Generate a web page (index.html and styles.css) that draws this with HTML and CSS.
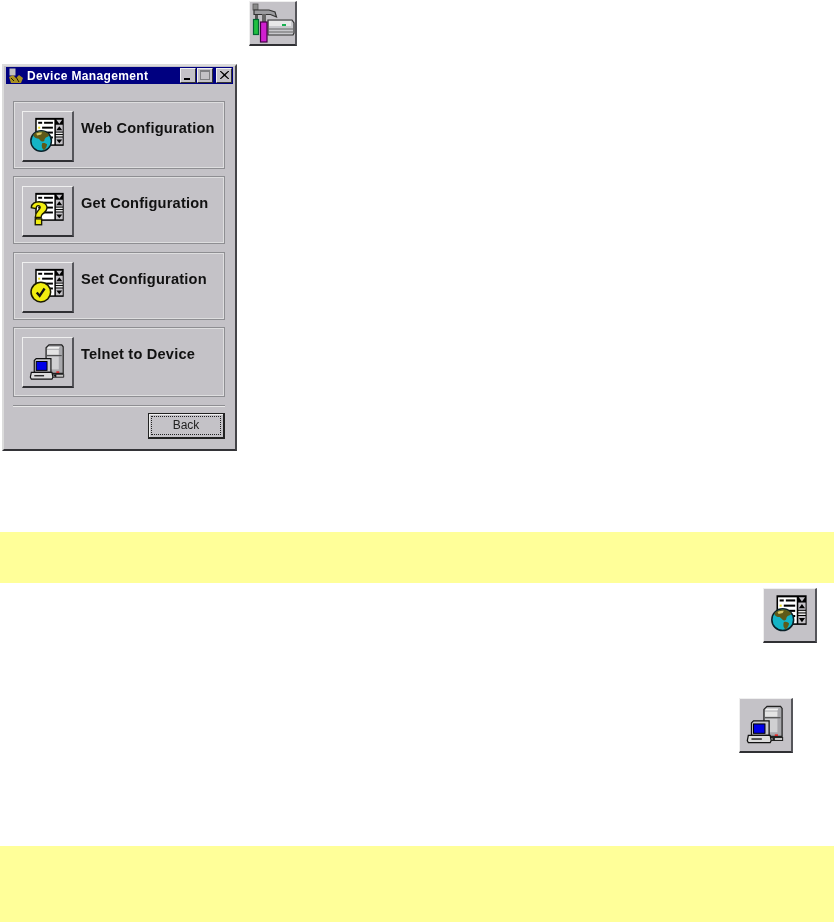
FILE: index.html
```html
<!DOCTYPE html>
<html lang="en">
<head>
    <meta charset="UTF-8">
    <title>Device Management</title>
    <link rel="stylesheet" href="styles.css">
</head>
<body>
<svg class="defs" width="0" height="0">
    <defs>
        <g id="listform">
            <rect x="13" y="7" width="29" height="28.500" fill="#000"/>
            <rect x="14.500" y="9" width="18" height="25" fill="#fff"/>
            <rect x="16" y="11" width="4" height="2" fill="#000"/>
            <rect x="22" y="11" width="9" height="2" fill="#000"/>
            <rect x="16" y="16" width="2" height="2" fill="#e8d820"/>
            <rect x="20" y="16" width="11" height="2" fill="#000"/>
            <rect x="16" y="21" width="15" height="2" fill="#000"/>
            <rect x="16" y="26" width="15" height="2" fill="#000"/>
            <path d="M34.500 9h6l-3 4z" fill="#c4c2c7"/>
            <rect x="34" y="14" width="7" height="7" fill="#c4c2c7"/>
            <path d="M37.500 15.500l3 4h-6z" fill="#000"/>
            <rect x="34" y="22" width="7" height="1.500" fill="#e8e8e8"/>
            <rect x="34" y="24.500" width="7" height="1.500" fill="#e8e8e8"/>
            <rect x="34" y="27" width="7" height="7" fill="#c4c2c7"/>
            <path d="M37.500 33l-3-4h6z" fill="#000"/>
        </g>
        <symbol id="icon-web" viewBox="0 0 52 52">
            <use href="#listform"/>
            <circle cx="19" cy="30.500" r="10.500" fill="#14b4c6" stroke="#0a2028" stroke-width="1.500"/>
            <path d="M11 24c3-3 7-4 11-3 2 1 5 2 5 4-1 2-3 1-4 3-1 1 0 3-2 3-2 1-3-2-5-3-2 0-5-1-5-4z" fill="#5f5a18"/>
            <path d="M20 33c2-1 4 0 5 1 0 2-1 4-3 6-2-1-3-4-2-7z" fill="#5f5a18"/>
            <path d="M14 23c2-1 4-1 6-1l-1 2-4 1z" fill="#d8c868"/>
        </symbol>
        <symbol id="icon-get" viewBox="0 0 52 52">
            <use href="#listform"/>
            <path d="M9 22c0-4 4-6 8-6 5 0 8 3 8 6 0 4-3 5-5 7-1 1-1 2-1 3h-6c0-4 1-5 3-7 1-1 2-2 2-3s-1-2-2-2-2 1-2 3z" fill="#f2ee10" stroke="#1a1a00" stroke-width="1.400"/>
            <rect x="13" y="33.500" width="6.500" height="6" fill="#f2ee10" stroke="#1a1a00" stroke-width="1.400"/>
        </symbol>
        <symbol id="icon-set" viewBox="0 0 52 52">
            <use href="#listform"/>
            <circle cx="18.700" cy="30.700" r="10" fill="#f2ee10" stroke="#1a1a00" stroke-width="1.600"/>
            <path d="M14.500 31l3 3.500 5-7.500" fill="none" stroke="#111" stroke-width="2.400"/>
        </symbol>
        <symbol id="icon-telnet" viewBox="0 0 52 52">
            <path d="M24 11l3-3h13l1.500 2v27H24z" fill="#a8a8ac" stroke="#222" stroke-width="1.200"/>
            <path d="M26 10h12l-1 2H25z" fill="#f2f2f2"/>
            <rect x="25" y="13" width="12" height="5" fill="#e4e4e4"/>
            <path d="M25 19h15" stroke="#444" stroke-width="1"/>
            <rect x="25" y="20" width="12" height="13" fill="#d0d0d2"/>
            <rect x="34.500" y="35" width="3" height="1.600" fill="#e02020"/>
            <path d="M28 38h14v3H28z" fill="#c8c8c8" stroke="#222" stroke-width="1"/>
            <path d="M12 24l2-2h15v14H12z" fill="#c8c8cc" stroke="#111" stroke-width="1.200"/>
            <rect x="14" y="25" width="11" height="9" fill="#0000e8" stroke="#000" stroke-width="1"/>
            <path d="M9 36h21l1 5-1 2H9l-1-2z" fill="#dcdcdc" stroke="#111" stroke-width="1.200"/>
            <path d="M12 39.500h10" stroke="#222" stroke-width="1.400"/>
            <path d="M31 39.500l3.500-1.500v3z" fill="#111"/>
        </symbol>
        <symbol id="icon-tools" viewBox="0 0 46 44">
            <path d="M18 18h24l2 3v10l-1 2H18z" fill="#c8c8cc" stroke="#333" stroke-width="1.200"/>
            <rect x="19" y="19" width="22" height="5" fill="#e8e8e8"/>
            <path d="M18 27h25M18 30h25" stroke="#666" stroke-width="1"/>
            <rect x="32" y="22" width="4" height="2" fill="#18b050"/>
            <rect x="3" y="2" width="5" height="6" fill="#8a8a8a" stroke="#555" stroke-width=".8"/>
            <path d="M4 8h15l6 2 1.500 5-6-2.500H4z" fill="#9c9ca0" stroke="#333" stroke-width="1.200"/>
            <rect x="5" y="13" width="3" height="5" fill="#555"/>
            <rect x="3.500" y="17.500" width="5" height="15" fill="#20c040" stroke="#063" stroke-width="1.200"/>
            <rect x="12" y="12" width="4" height="9" fill="#666"/>
            <rect x="10.500" y="20" width="6.500" height="20" fill="#d020d0" stroke="#404" stroke-width="1.200"/>
        </symbol>
    </defs>
</svg>

<div class="toprow">
    <div class="iconbtn toolbtn"><svg><use href="#icon-tools"/></svg></div>
</div>

<div class="window">
    <div class="titlebar">
        <svg class="appicon" viewBox="0 0 16 16">
            <rect x="1" y="0" width="7" height="8" fill="#c0c0c0" stroke="#000080"/>
            <path d="M1 9l4-2 3 3 3-3 4 3-2 5H3z" fill="#a89020"/>
            <path d="M3 10l3 3M8 9l3 5" stroke="#201800"/>
        </svg>
        <span class="titletext">Device Management</span>
        <div class="winbtns">
            <div class="winbtn"><span class="minmark"></span></div>
            <div class="winbtn"><span class="maxmark"></span></div>
            <div class="winbtn closebtn"><svg viewBox="0 0 9 8"><path d="M1 0l3.500 3 3.500-3h1v.5L5.500 4 9 7.500V8H8L4.500 5 1 8H0v-.5L3.500 4 0 .5V0z" fill="#000"/></svg></div>
        </div>
    </div>

    <div class="group first">
        <div class="iconbtn"><svg><use href="#icon-web"/></svg></div>
        <div class="grouplabel">Web Configuration</div>
    </div>
    <div class="group">
        <div class="iconbtn"><svg><use href="#icon-get"/></svg></div>
        <div class="grouplabel">Get Configuration</div>
    </div>
    <div class="group">
        <div class="iconbtn"><svg><use href="#icon-set"/></svg></div>
        <div class="grouplabel">Set Configuration</div>
    </div>
    <div class="group last">
        <div class="iconbtn"><svg><use href="#icon-telnet"/></svg></div>
        <div class="grouplabel">Telnet to Device</div>
    </div>

    <div class="separator"></div>
    <div class="backrow">
        <div class="backbtn"><span class="backinner">Back</span></div>
    </div>
</div>

<div class="note note1"></div>

<div class="iconline webline">
    <div class="iconbtn bigbtn"><svg><use href="#icon-web"/></svg></div>
</div>
<div class="iconline telnetline">
    <div class="iconbtn bigbtn"><svg><use href="#icon-telnet"/></svg></div>
</div>

<div class="note note2"></div>
</body>
</html>
```

FILE: styles.css
```css
html, body {
    margin: 0;
    padding: 0;
    background-color: #ffffff;
}

body {
    height: 922px;
    overflow: hidden;
    font-family: "Liberation Sans", Arial, sans-serif;
}

.defs {
    display: block;
    height: 0;
}

.toprow {
    height: 64px;
    padding-left: 249px;
    padding-top: 1px;
    box-sizing: border-box;
}

.iconbtn {
    width: 52px;
    height: 51px;
    box-sizing: border-box;
    background-color: #c4c2c7;
    border-top: 1px solid #efefef;
    border-left: 1px solid #efefef;
    border-right: 2px solid #55555a;
    border-bottom: 2px solid #303034;
    flex-shrink: 0;
    filter: blur(.35px);
}

.iconbtn svg {
    display: block;
    width: 52px;
    height: 51px;
    margin: -1px 0 0 -1px;
}

.toolbtn {
    width: 48px;
    height: 45px;
}

.toolbtn svg {
    width: 46px;
    height: 44px;
    margin: 0;
}

/* dialog window */
.window {
    width: 235px;
    height: 387px;
    margin-left: 2px;
    box-sizing: border-box;
    background-color: #c4c2c7;
    border-top: 2px solid #dcdcdc;
    border-left: 2px solid #dcdcdc;
    border-right: 2px solid #444448;
    border-bottom: 2px solid #333337;
    padding: 1px 2px 0 2px;
}

.titlebar {
    height: 17px;
    background-color: #000080;
    color: #ffffff;
    display: flex;
    align-items: center;
    padding: 0 1px 0 2px;
}

.appicon {
    width: 16px;
    height: 16px;
    flex-shrink: 0;
}

.titletext {
    font-size: 12px;
    font-weight: bold;
    margin-left: 3px;
    letter-spacing: .35px;
    filter: blur(.3px);
}

.winbtns {
    margin-left: auto;
    display: flex;
}

.winbtn {
    width: 16px;
    height: 15px;
    margin-left: 1px;
    box-sizing: border-box;
    background-color: #c4c2c7;
    border-top: 1px solid #f0f0f0;
    border-left: 1px solid #f0f0f0;
    border-right: 1px solid #333;
    border-bottom: 1px solid #333;
    display: flex;
    align-items: flex-end;
    justify-content: center;
    padding-bottom: 2px;
}

.closebtn {
    margin-left: 3px;
}

.minmark {
    width: 6px;
    height: 2px;
    background-color: #000000;
    margin-right: 3px;
}

.maxmark {
    width: 10px;
    height: 10px;
    box-sizing: border-box;
    border: 1px solid #808084;
    border-top-width: 2px;
}

.closebtn svg {
    width: 9px;
    height: 8px;
    display: block;
    margin-bottom: 1px;
}

.group {
    width: 212px;
    height: 68px;
    margin: 7.400px 0 0 7px;
    box-sizing: border-box;
    border: 1px solid #8e8e92;
    outline: 1px solid #dededf;
    outline-offset: -2px;
    display: flex;
    padding: 9px 0 0 8px;
    gap: 7px;
}

.group.first {
    margin-top: 17px;
}

.group.last {
    height: 70px;
}

.grouplabel {
    font-size: 14.600px;
    font-weight: bold;
    letter-spacing: .2px;
    color: #111111;
    padding-top: 9px;
    white-space: nowrap;
    filter: blur(.3px);
}

.separator {
    width: 212px;
    height: 2px;
    box-sizing: border-box;
    margin: 8px 0 0 7px;
    background-color: #8e8e92;
    border-bottom: 1px solid #e8e8e8;
}

.backrow {
    width: 212px;
    margin: 6px 0 0 7px;
    display: flex;
    justify-content: flex-end;
}

.backbtn {
    width: 77px;
    height: 26px;
    box-sizing: border-box;
    border: 1px solid #222222;
    border-right-width: 2px;
    border-bottom-width: 2px;
    box-shadow: inset 1px 1px 0 #eeeeee;
    padding: 2px;
}

.backinner {
    display: block;
    height: 100%;
    border: 1px dotted #222222;
    box-sizing: border-box;
    text-align: center;
    font-size: 12px;
    line-height: 17px;
    color: #222222;
    filter: blur(.25px);
}

/* yellow note bands */
.note {
    background-color: #ffff99;
}

.note1 {
    height: 51px;
    margin-top: 81px;
}

.note2 {
    height: 76px;
    margin-top: 93px;
}

.iconline {
    display: flex;
    justify-content: flex-end;
}

.bigbtn {
    width: 54px;
    height: 55px;
}

.bigbtn svg {
    width: 54px;
    height: 54px;
}

.webline {
    padding: 5px 17px 0 0;
}

.telnetline {
    padding: 55px 41px 0 0;
}
```
